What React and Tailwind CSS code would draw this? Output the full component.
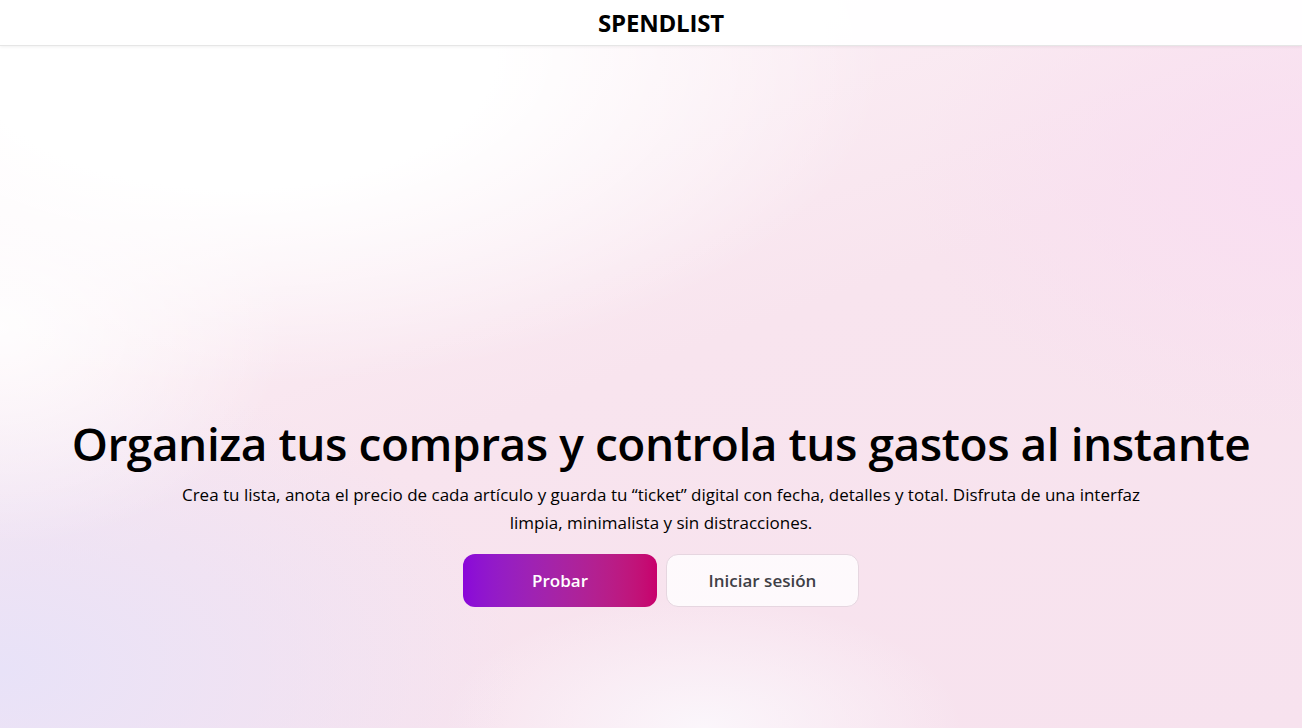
export default function App() {
  return (
    <div className="relative min-h-screen w-full overflow-hidden bg-[#f8e3ee] font-['Open_Sans',sans-serif] text-black">
      <div className="pointer-events-none absolute inset-0 bg-[radial-gradient(ellipse_50%_45%_at_18%_8%,#ffffff_0%,#ffffff_40%,rgba(255,255,255,0)_100%),radial-gradient(ellipse_22%_30%_at_0%_45%,rgba(255,255,255,0.9)_0%,rgba(255,255,255,0)_100%),radial-gradient(ellipse_40%_42%_at_0%_92%,#e8e2f8_0%,rgba(233,227,248,0)_100%),radial-gradient(ellipse_30%_35%_at_100%_25%,#f9def1_0%,rgba(249,222,241,0)_100%),radial-gradient(ellipse_20%_18%_at_54%_100%,#fbf6fb_0%,rgba(251,246,251,0)_100%),linear-gradient(160deg,#fdf5f9_0%,#f8e4ee_50%,#f7e2ee_100%)]" />
      <header className="relative z-10 flex h-[46px] items-center justify-center border-b border-[#e6e6e6] bg-white/95 pl-[20px] shadow-[0_1px_3px_rgba(0,0,0,0.06)]">
        <span className="text-[24px] font-bold leading-none tracking-[-0.2px]">SPENDLIST</span>
      </header>
      <main className="relative z-10 flex flex-col items-center pl-[44px] pr-6 pt-[369px] text-center">
        <h1 className="text-[46px] font-semibold leading-[56px] tracking-[-0.45px]">
          Organiza tus compras y controla tus gastos al instante
        </h1>
        <p className="mt-[10px] max-w-[980px] text-[17px] leading-[28px]">
          Crea tu lista, anota el precio de cada artículo y guarda tu “ticket” digital con fecha, detalles y total. Disfruta de una interfaz limpia, minimalista y sin distracciones.
        </p>
        <div className="mt-[17px] flex gap-[9px]">
          <button className="flex h-[53px] w-[194px] items-center justify-center rounded-xl bg-gradient-to-r from-[#8a06d9] to-[#c8006c] text-[17px] font-semibold text-white">
            Probar
          </button>
          <button className="flex h-[53px] w-[193px] items-center justify-center rounded-xl border border-[#e6d6e0] bg-white/80 text-[17px] font-semibold text-[#3f3f46]">
            Iniciar sesión
          </button>
        </div>
      </main>
    </div>
  );
}
